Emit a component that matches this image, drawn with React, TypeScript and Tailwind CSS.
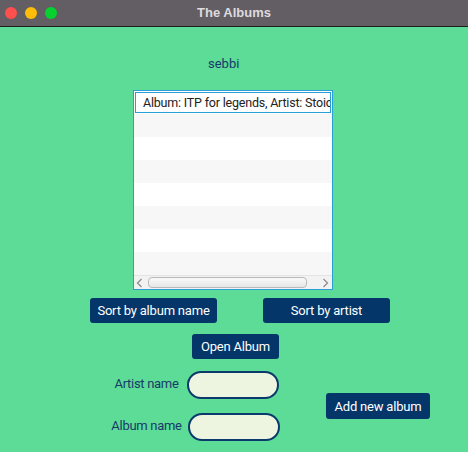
import React from "react";

export default function App() {
  const rows = Array.from({ length: 7 });
  return (
    <div className="w-[468px] h-[452px] overflow-hidden bg-[#5cdc96] font-['Roboto',sans-serif]">
      {/* Title bar */}
      <div className="h-[27px] bg-[#625e64] border-b border-[#1e1c20] grid grid-cols-[1fr_auto_1fr] items-center">
        <div className="flex items-center gap-[8px] pl-[5px]">
          <span className="w-[12px] h-[12px] rounded-full bg-[#fe4f4f]" />
          <span className="w-[12px] h-[12px] rounded-full bg-[#fdbd09]" />
          <span className="w-[12px] h-[12px] rounded-full bg-[#06d12e]" />
        </div>
        <div className="text-[13px] font-bold text-[#dedade] font-['Liberation_Sans',sans-serif]">The Albums</div>
        <div />
      </div>

      {/* sebbi */}
      <div className="pt-[29px] pl-[208px] text-[13px] leading-[16px] text-[#173a6a]">sebbi</div>

      {/* list */}
      <div className="mt-[18px] ml-[133px] w-[200px] h-[200px] border border-[#2a9fd6] bg-white flex flex-col overflow-hidden">
        <div className="h-[23px] shrink-0 p-[1px]">
          <div className="h-[21px] border border-[#2a9fd6] pl-[7px] text-[12.5px] tracking-[-0.2px] leading-[19px] text-[#222] whitespace-nowrap overflow-hidden">
            Album: ITP for legends, Artist: Stoic
          </div>
        </div>
        {rows.map((_, i) => (
          <div key={i} className={i % 2 === 0 ? "h-[23px] shrink-0 bg-[#f7f7f7]" : "h-[23px] shrink-0 bg-white"} />
        ))}
        <div className="h-[14px] shrink-0 bg-[#f2f2f2] border-t border-[#e4e4e4] flex items-center px-[2px] gap-[5px]">
          <svg width="7" height="10" viewBox="0 0 7 10" className="shrink-0">
            <path d="M5.5 1 L1.5 5 L5.5 9" stroke="#8a8a8a" strokeWidth="1.2" fill="none" />
          </svg>
          <div className="flex-1 h-[11px] rounded-[4px] border border-[#b9b9b9] bg-gradient-to-b from-[#fafafa] to-[#e6e6e6]" />
          <svg width="7" height="10" viewBox="0 0 7 10" className="shrink-0 ml-[10px] mr-[1px]">
            <path d="M1.5 1 L5.5 5 L1.5 9" stroke="#8a8a8a" strokeWidth="1.2" fill="none" />
          </svg>
        </div>
      </div>

      {/* Sort buttons */}
      <div className="mt-[8px] ml-[90px] flex gap-[46px]">
        <button className="w-[127px] h-[25px] rounded-[3px] bg-[#043669] text-white text-[13px] tracking-[-0.2px]">Sort by album name</button>
        <button className="w-[127px] h-[25px] rounded-[3px] bg-[#043669] text-white text-[13px] tracking-[-0.2px]">Sort by artist</button>
      </div>

      {/* Open album */}
      <div className="mt-[11px] ml-[192px]">
        <button className="w-[87px] h-[25px] rounded-[3px] bg-[#043669] text-white text-[13px] tracking-[-0.2px]">Open Album</button>
      </div>

      {/* Inputs and add */}
      <div className="mt-[12px] ml-[106px] flex items-center">
        <div className="grid grid-cols-[81px_auto] gap-y-[14px] items-center">
          <div className="text-center text-[13px] text-[#173a6a] tracking-[-0.3px] -mt-[3px]">Artist name</div>
          <div className="w-[92px] h-[28px] rounded-full border-2 border-[#0a3a6c] bg-[#edf4e0]" />
          <div className="text-center text-[13px] text-[#173a6a] tracking-[-0.3px] -mt-[3px]">Album name</div>
          <div className="ml-[1px] w-[92px] h-[28px] rounded-full border-2 border-[#0a3a6c] bg-[#edf4e0]" />
        </div>
        <button className="ml-[46px] w-[104px] h-[26px] rounded-[3px] bg-[#043669] text-white text-[13px] tracking-[-0.2px]">Add new album</button>
      </div>
    </div>
  );
}
